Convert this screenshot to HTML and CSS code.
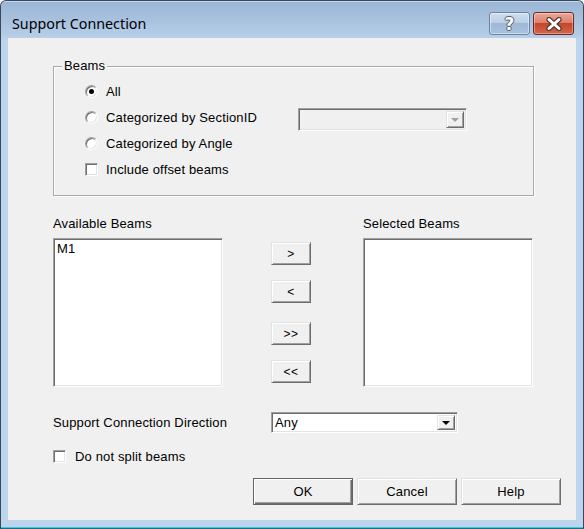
FILE: index.html
```html
<!DOCTYPE html>
<html>
<head>
<meta charset="utf-8">
<link rel="stylesheet" href="styles.css">
</head>
<body>
<div class="window">
  <div class="titlebar">
    <span class="title">Support Connection</span>
    <div class="caption-buttons">
      <div class="cap-btn cap-help"><span class="q">?</span></div>
      <div class="cap-btn cap-close">
        <svg width="20" height="14" viewBox="0 0 20 14">
          <path d="M5 2.5 L15 11.5 M15 2.5 L5 11.5" stroke="#4a3a36" stroke-width="5.2" stroke-linecap="round"/>
          <path d="M5 2.5 L15 11.5 M15 2.5 L5 11.5" stroke="#ffffff" stroke-width="3" stroke-linecap="round"/>
        </svg>
      </div>
    </div>
  </div>
  <div class="client">
    <div class="group">
      <span class="group-label">Beams</span>
      <div class="opt"><span class="radio checked"></span><span>All</span></div>
      <div class="opt-row">
        <div class="opt fixed"><span class="radio"></span><span>Categorized by SectionID</span></div>
        <div class="combo disabled"><span class="combo-text"></span><span class="combo-btn"><span class="arrow"></span></span></div>
      </div>
      <div class="opt"><span class="radio"></span><span>Categorized by Angle</span></div>
      <div class="opt"><span class="check"></span><span>Include offset beams</span></div>
    </div>

    <div class="lists">
      <div class="list-col">
        <div class="list-label">Available Beams</div>
        <div class="listbox"><div class="item">M1</div></div>
      </div>
      <div class="move-col">
        <div class="btn move m1">&gt;</div>
        <div class="btn move m2">&lt;</div>
        <div class="btn move m3">&gt;&gt;</div>
        <div class="btn move m4">&lt;&lt;</div>
      </div>
      <div class="list-col right">
        <div class="list-label">Selected Beams</div>
        <div class="listbox"></div>
      </div>
    </div>

    <div class="dir-row">
      <span class="dir-label">Support Connection Direction</span>
      <div class="combo white"><span class="combo-text">Any</span><span class="combo-btn"><span class="arrow"></span></span></div>
    </div>

    <div class="split-row">
      <span class="check"></span><span>Do not split beams</span>
    </div>

    <div class="actions">
      <div class="btn action default">OK</div>
      <div class="btn action">Cancel</div>
      <div class="btn action">Help</div>
    </div>
  </div>
  <div class="bottom-frame"></div>
</div>
</body>
</html>
```

FILE: styles.css
```css
html, body {
  margin: 0;
  padding: 0;
  background: #ffffff;
}

body {
  font-family: "Liberation Sans", Arial, sans-serif;
  font-size: 13px;
  letter-spacing: 0.15px;
  color: #000;
}

.window {
  width: 584px;
  height: 529px;
  box-sizing: border-box;
  border: 1px solid #38475a;
  border-bottom-color: #1f6f80;
  border-radius: 6px 6px 0 0;
  background: linear-gradient(#9bb6d5 0px, #a4bedb 14px, #b6cee8 36px, #bcd4ed 40px, #bcd4ed 100%);
  box-shadow: inset 0 1px 0 #c6d8ec;
  display: flex;
  flex-direction: column;
  overflow: hidden;
}

.titlebar {
  flex: 0 0 37px;
  display: flex;
  align-items: flex-start;
  padding-left: 11px;
}

.title {
  margin-top: 13px;
  font-family: "Noto Sans", "Open Sans", sans-serif;
  font-size: 14.3px;
  letter-spacing: 0;
  line-height: 20px;
  color: #000;
}

.caption-buttons {
  margin-left: auto;
  margin-right: 9px;
  margin-top: 11px;
  display: flex;
  gap: 3px;
}

.cap-btn {
  width: 41px;
  height: 23px;
  box-sizing: border-box;
  border-radius: 3px;
  display: flex;
  align-items: center;
  justify-content: center;
}

.cap-help {
  border: 1px solid #6c84a4;
  background: linear-gradient(#cfdef0 0%, #bccfe6 45%, #9fb8d6 50%, #a8c1de 100%);
  box-shadow: inset 0 0 0 1px rgba(255, 255, 255, 0.45);
}

.cap-help .q {
  font-family: "DejaVu Sans", sans-serif;
  font-weight: bold;
  font-size: 17px;
  line-height: 20px;
  letter-spacing: 0;
  color: #ffffff;
  text-shadow: -1px 0 #4d5a6c, 1px 0 #4d5a6c, 0 -1px #4d5a6c, 0 1px #4d5a6c;
}

.cap-close {
  border: 1px solid #6e2a1c;
  background: linear-gradient(#eaa89a 0%, #dc826e 45%, #c6452b 50%, #d4664a 100%);
  box-shadow: inset 0 0 0 1px rgba(255, 255, 255, 0.35);
}

.client {
  flex: 0 0 482px;
  margin: 0 7px;
  background: #f0f0f0;
  box-sizing: border-box;
  padding-left: 45px;
  padding-top: 28px;
}

.bottom-frame {
  flex: 1 1 auto;
  box-shadow: inset 0 -1px 0 #48c3d6;
}

/* group box */
.group {
  position: relative;
  width: 481px;
  height: 130px;
  box-sizing: border-box;
  border: 1px solid #a9a9a9;
  box-shadow: 1px 1px 0 #ffffff, inset 1px 1px 0 #ffffff;
  padding: 11px 0 0 31px;
}

.group-label {
  position: absolute;
  top: -9px;
  left: 8px;
  padding: 0 2px;
  background: #f0f0f0;
  line-height: 16px;
}

.opt {
  display: flex;
  align-items: center;
  height: 26px;
}

.opt-row {
  display: flex;
  align-items: center;
  height: 26px;
}

.opt.fixed {
  flex: 0 0 213px;
}

.radio {
  flex: none;
  position: relative;
  width: 13px;
  height: 13px;
  box-sizing: border-box;
  border-radius: 50%;
  background: #ffffff;
  border: 1px solid;
  border-color: #a0a0a0 #ffffff #ffffff #a0a0a0;
  box-shadow: inset 1px 1px 0 #6d6d6d, inset -1px -1px 0 #e3e3e3;
  margin-right: 8px;
}

.radio.checked::after {
  content: "";
  position: absolute;
  left: 3px;
  top: 3px;
  width: 5px;
  height: 5px;
  border-radius: 50%;
  background: #000;
}

.check {
  flex: none;
  width: 13px;
  height: 13px;
  box-sizing: border-box;
  background: #ffffff;
  border: 1px solid;
  border-color: #a0a0a0 #ffffff #ffffff #a0a0a0;
  box-shadow: inset 1px 1px 0 #6d6d6d, inset -1px -1px 0 #e3e3e3;
  margin-right: 8px;
}

/* combos */
.combo {
  display: flex;
  box-sizing: border-box;
  border: 1px solid;
  border-color: #a0a0a0 #ffffff #ffffff #a0a0a0;
  box-shadow: inset 1px 1px 0 #6d6d6d, inset -1px -1px 0 #e3e3e3;
  padding: 2px;
}

.combo.disabled {
  width: 169px;
  height: 23px;
  margin-top: 5px;
  background: #f0f0f0;
}

.combo.white {
  width: 187px;
  height: 21px;
  background: #ffffff;
}

.combo-text {
  flex: 1 1 auto;
  line-height: 17px;
  padding-left: 1px;
  margin-top: -1px;
}

.combo-btn {
  flex: 0 0 18px;
  box-sizing: border-box;
  background: #f0f0f0;
  border: 1px solid;
  border-color: #e3e3e3 #6d6d6d #6d6d6d #e3e3e3;
  box-shadow: inset 1px 1px 0 #ffffff, inset -1px -1px 0 #a0a0a0;
  display: flex;
  align-items: center;
  justify-content: center;
}

.arrow {
  width: 0;
  height: 0;
  border-left: 4px solid transparent;
  border-right: 4px solid transparent;
  border-top: 4px solid #000;
  margin-top: 1px;
}

.combo.disabled .arrow {
  border-top-color: #a0a0a0;
}

/* lists */
.lists {
  display: flex;
  margin-top: 20px;
}

.list-col {
  width: 170px;
}

.list-col.right {
  margin-left: 52px;
}

.list-label {
  line-height: 16px;
  margin-bottom: 6px;
}

.listbox {
  height: 149px;
  box-sizing: border-box;
  background: #ffffff;
  border: 1px solid;
  border-color: #a0a0a0 #ffffff #ffffff #a0a0a0;
  box-shadow: inset 1px 1px 0 #6d6d6d, inset -1px -1px 0 #e3e3e3;
  padding: 2px 3px;
}

.item {
  line-height: 16px;
}

.move-col {
  margin-left: 48px;
  width: 40px;
  display: flex;
  flex-direction: column;
  padding-top: 26px;
}

.btn {
  box-sizing: border-box;
  background: #f0f0f0;
  border: 1px solid;
  border-color: #e3e3e3 #6d6d6d #6d6d6d #e3e3e3;
  box-shadow: inset 1px 1px 0 #ffffff, inset -1px -1px 0 #a0a0a0;
  display: flex;
  align-items: center;
  justify-content: center;
}

.move {
  height: 23px;
  font-size: 12px;
  letter-spacing: 0.5px;
  line-height: 14px;
}

.m2 { margin-top: 15px; }
.m3 { margin-top: 19px; }
.m4 { margin-top: 15px; }

/* direction */
.dir-row {
  display: flex;
  align-items: center;
  margin-top: 25px;
  height: 21px;
}

.dir-label {
  width: 218px;
}

.split-row {
  display: flex;
  align-items: center;
  margin-top: 17px;
  height: 13px;
}

.split-row .check {
  margin-right: 9px;
}

.actions {
  display: flex;
  margin-top: 15px;
  margin-left: 200px;
  gap: 4px;
}

.action {
  width: 100px;
  height: 27px;
  line-height: 16px;
}

.action.default {
  border-color: #646464;
  box-shadow: inset 1px 1px 0 #ffffff, inset -1px -1px 0 #6d6d6d, inset -2px -2px 0 #a0a0a0;
}
```
